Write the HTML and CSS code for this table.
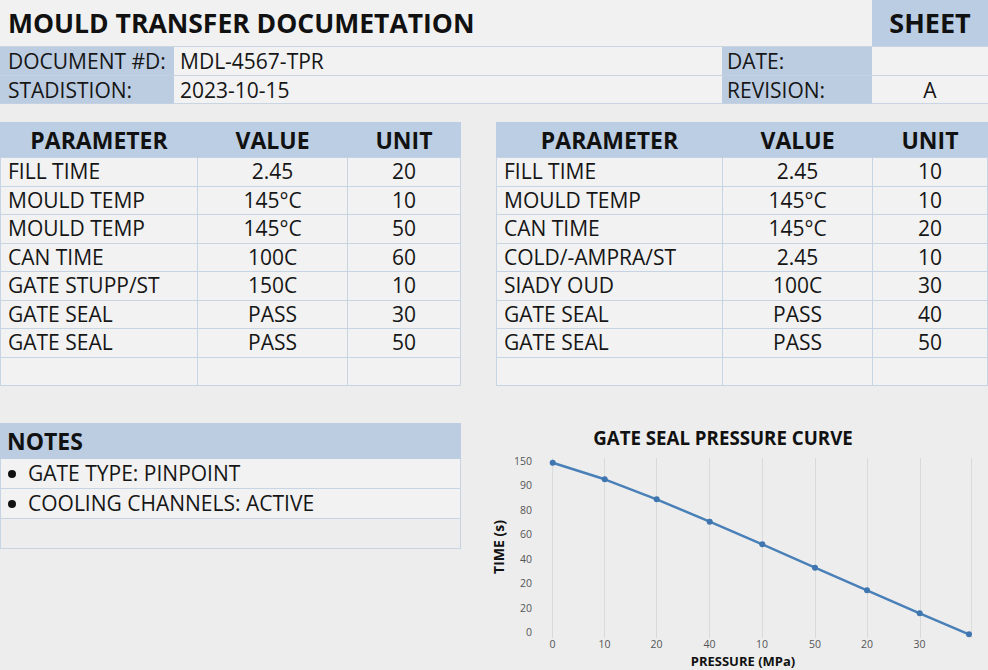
FILE: index.html
```html
<!DOCTYPE html>
<html lang="en">
<head>
<meta charset="utf-8">
<title>Mould Transfer Documentation</title>
<link rel="stylesheet" href="styles.css">
</head>
<body>
<div class="page">
  <div class="top">
    <div class="title">MOULD TRANSFER DOCUMETATION</div>
    <div class="sheet-tag">SHEET</div>
    <div class="lbl">DOCUMENT #D:</div>
    <div class="val">MDL-4567-TPR</div>
    <div class="lbl lbl-r">DATE:</div>
    <div class="val val-c"></div>
    <div class="lbl">STADISTION:</div>
    <div class="val">2023-10-15</div>
    <div class="lbl lbl-r">REVISION:</div>
    <div class="val val-c">A</div>
  </div>

  <div class="tables">
    <table class="params params-left">
      <colgroup><col class="c1l"><col class="c2"><col class="c3"></colgroup>
      <thead><tr><th>PARAMETER</th><th>VALUE</th><th>UNIT</th></tr></thead>
      <tbody>
        <tr><td>FILL TIME</td><td>2.45</td><td>20</td></tr>
        <tr><td>MOULD TEMP</td><td>145°C</td><td>10</td></tr>
        <tr><td>MOULD TEMP</td><td>145°C</td><td>50</td></tr>
        <tr><td>CAN TIME</td><td>100C</td><td>60</td></tr>
        <tr><td>GATE STUPP/ST</td><td>150C</td><td>10</td></tr>
        <tr><td>GATE SEAL</td><td>PASS</td><td>30</td></tr>
        <tr><td>GATE SEAL</td><td>PASS</td><td>50</td></tr>
        <tr><td></td><td></td><td></td></tr>
      </tbody>
    </table>
    <table class="params params-right">
      <colgroup><col class="c1r"><col class="c2"><col class="c3"></colgroup>
      <thead><tr><th>PARAMETER</th><th>VALUE</th><th>UNIT</th></tr></thead>
      <tbody>
        <tr><td>FILL TIME</td><td>2.45</td><td>10</td></tr>
        <tr><td>MOULD TEMP</td><td>145°C</td><td>10</td></tr>
        <tr><td>CAN TIME</td><td>145°C</td><td>20</td></tr>
        <tr><td>COLD/-AMPRA/ST</td><td>2.45</td><td>10</td></tr>
        <tr><td>SIADY OUD</td><td>100C</td><td>30</td></tr>
        <tr><td>GATE SEAL</td><td>PASS</td><td>40</td></tr>
        <tr><td>GATE SEAL</td><td>PASS</td><td>50</td></tr>
        <tr><td></td><td></td><td></td></tr>
      </tbody>
    </table>
  </div>

  <div class="bottom">
    <div class="notes">
      <div class="notes-head">NOTES</div>
      <div class="note"><span class="dot"></span>GATE TYPE: PINPOINT</div>
      <div class="note"><span class="dot"></span>COOLING CHANNELS: ACTIVE</div>
      <div class="note note-empty"></div>
    </div>
    <div class="chart">
      <svg class="chart-svg" width="498" height="255" viewBox="0 0 498 255">
        <text class="c-title" x="233" y="29" text-anchor="middle">GATE SEAL PRESSURE CURVE</text>
        <g class="grid">
          <line x1="62.5" y1="42" x2="62.5" y2="222"/>
          <line x1="114.5" y1="42" x2="114.5" y2="222"/>
          <line x1="166.5" y1="42" x2="166.5" y2="222"/>
          <line x1="219.5" y1="42" x2="219.5" y2="222"/>
          <line x1="272.5" y1="42" x2="272.5" y2="222"/>
          <line x1="325.5" y1="42" x2="325.5" y2="222"/>
          <line x1="377.5" y1="42" x2="377.5" y2="222"/>
          <line x1="430.5" y1="42" x2="430.5" y2="222"/>
          <line x1="481.5" y1="42" x2="481.5" y2="222"/>
        </g>
        <g class="ylab" text-anchor="end">
          <text x="42" y="49">150</text>
          <text x="42" y="73">90</text>
          <text x="42" y="98">80</text>
          <text x="42" y="122">60</text>
          <text x="42" y="147">40</text>
          <text x="42" y="171">20</text>
          <text x="42" y="196">20</text>
          <text x="42" y="220">0</text>
        </g>
        <g class="xlab" text-anchor="middle">
          <text x="62.5" y="232">0</text>
          <text x="114.5" y="232">10</text>
          <text x="166.5" y="232">20</text>
          <text x="219.5" y="232">40</text>
          <text x="272" y="232">10</text>
          <text x="325" y="232">50</text>
          <text x="377" y="232">20</text>
          <text x="429.5" y="232">30</text>
        </g>
        <polyline class="series" points="62.7,46.7 114.7,63.3 166.7,83.3 219.7,105.7 272.3,128.3 325,151.7 377,174.3 429.7,197.3 479,218.3"/>
        <g class="marks">
          <circle cx="62.7" cy="46.7" r="3"/>
          <circle cx="114.7" cy="63.3" r="3"/>
          <circle cx="166.7" cy="83.3" r="3"/>
          <circle cx="219.7" cy="105.7" r="3"/>
          <circle cx="272.3" cy="128.3" r="3"/>
          <circle cx="325" cy="151.7" r="3"/>
          <circle cx="377" cy="174.3" r="3"/>
          <circle cx="429.7" cy="197.3" r="3"/>
          <circle cx="479" cy="218.3" r="3"/>
        </g>
        <text class="ax-title ax-y" x="9" y="131" text-anchor="middle" transform="rotate(-90 9 131)" dy="5">TIME (s)</text>
        <text class="ax-title" x="253" y="250" text-anchor="middle">PRESSURE (MPa)</text>
      </svg>
    </div>
  </div>
</div>
</body>
</html>
```

FILE: styles.css
```css
* { box-sizing: border-box; }
html, body { margin: 0; padding: 0; }
body {
  background: #ededed;
  font-family: "Open Sans", "Liberation Sans", sans-serif;
  color: #161616;
  width: 988px;
  height: 670px;
  overflow: hidden;
}
.page { width: 988px; }

/* ---------- top block ---------- */
.top {
  display: grid;
  grid-template-columns: 174px 548px 150px 116px;
  grid-template-rows: 47px 29px 28px;
}
.title {
  grid-column: 1 / 4;
  background: #f1f1f1;
  border-bottom: 1px solid #c9d5e3;
  font-weight: 700;
  font-size: 26.5px;
  line-height: 46px;
  padding-left: 8px;
  white-space: nowrap;
  color: #111;
}
.sheet-tag {
  background: #bbcde3;
  font-weight: 700;
  font-size: 27px;
  line-height: 46px;
  text-align: center;
  border-bottom: 1px solid #c9d5e3;
  color: #111;
}
.lbl {
  background: #bccde2;
  font-size: 21px;
  line-height: 28px;
  padding-left: 8px;
  border-bottom: 1px solid #c3d1e2;
  white-space: nowrap;
}
.lbl-r { padding-left: 5px; }
.val {
  background: #f2f2f2;
  font-size: 21px;
  line-height: 28px;
  padding-left: 6px;
  border-bottom: 1px solid #c9d5e3;
  white-space: nowrap;
}
.val-c { text-align: center; padding-left: 0; }

/* ---------- tables ---------- */
.tables {
  display: flex;
  justify-content: space-between;
  margin-top: 18px;
}
.params {
  border-collapse: collapse;
  table-layout: fixed;
  font-size: 21px;
}
.params-left { width: 461px; }
.params-right { width: 492px; }
.c1l { width: 197px; }
.c1r { width: 226px; }
.c2 { width: 150px; }
.params th {
  background: #bccee3;
  font-weight: 700;
  font-size: 23px;
  height: 35px;
  padding: 0;
  text-align: center;
  border: 1px solid #bccee3;
  border-bottom: 1px solid #c3d1e2;
  color: #111;
}
.params td {
  background: #f2f2f2;
  height: 28.5px;
  padding: 0;
  line-height: 27px;
  text-align: center;
  border: 1.5px solid #c6d4e4;
  white-space: nowrap;
  overflow: hidden;
}
.params td:first-child {
  text-align: left;
  padding-left: 7px;
}

/* ---------- bottom ---------- */
.bottom {
  display: flex;
  margin-top: 30px;
}
.notes {
  width: 461px;
  margin-top: 7px;
  flex: none;
}
.notes-head {
  background: #bccde2;
  font-weight: 700;
  font-size: 23px;
  line-height: 36px;
  height: 36px;
  padding-left: 7px;
  color: #111;
}
.note {
  background: #f2f2f2;
  font-size: 21px;
  height: 30px;
  line-height: 29px;
  border: 1.5px solid #c6d4e4;
  border-top: none;
  padding-left: 7px;
  display: flex;
  align-items: center;
  white-space: nowrap;
}
.note-empty { background: transparent; }
.dot {
  width: 8px;
  height: 8px;
  border-radius: 50%;
  background: #111;
  margin-right: 12px;
  flex: none;
}
.chart {
  margin-left: 29px;
  flex: none;
}
.chart-svg { display: block; }
.c-title {
  font-family: "Open Sans", sans-serif;
  font-weight: 700;
  font-size: 18.7px;
  fill: #111;
}
.grid line { stroke: #dadada; stroke-width: 1; }
.ylab text, .xlab text {
  font-family: "Open Sans", sans-serif;
  font-size: 10.5px;
  fill: #555;
}
.series {
  fill: none;
  stroke: #4a80b8;
  stroke-width: 2.5;
  stroke-linejoin: round;
}
.marks circle { fill: #3f76b0; }
.ax-title {
  font-family: "Open Sans", sans-serif;
  font-weight: 700;
  font-size: 13px;
  fill: #111;
}
.ax-y { font-size: 14px; }
```
